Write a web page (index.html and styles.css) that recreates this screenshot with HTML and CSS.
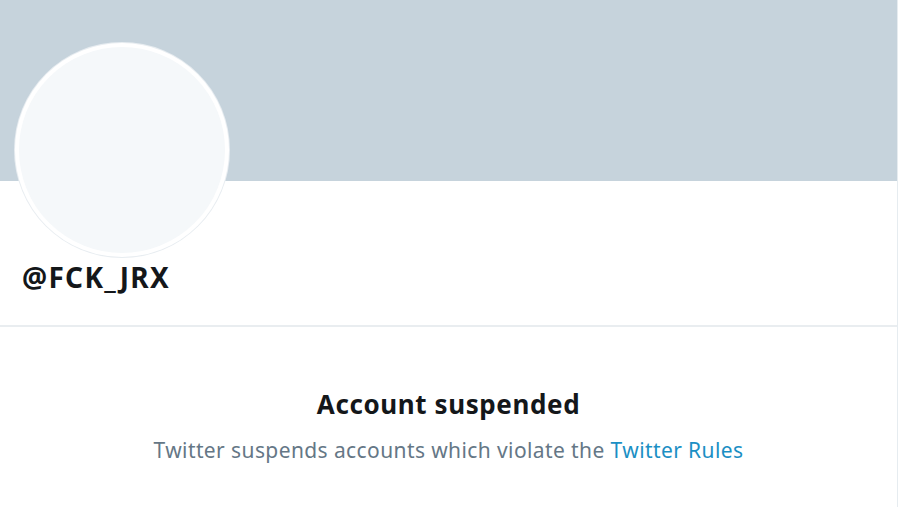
FILE: index.html
```html
<!DOCTYPE html>
<html lang="en">
<head>
    <meta charset="UTF-8">
    <meta name="viewport" content="width=device-width, initial-scale=1.0">
    <title>@FCK_JRX</title>
    <link rel="stylesheet" href="styles.css">
</head>
<body>
    <main class="profile">
        <div class="banner"></div>

        <div class="profile-head">
            <div class="avatar"></div>
            <h1 class="handle">@FCK_JRX</h1>
        </div>

        <section class="suspended">
            <h2>Account suspended</h2>
            <p>Twitter suspends accounts which violate the <a href="#">Twitter Rules</a></p>
        </section>
    </main>
</body>
</html>
```

FILE: styles.css
```css
body {
    margin: 0;
    background: #fff;
    font-family: "Noto Sans", "Open Sans", sans-serif;
    color: #14171a;
}
.profile {
    width: 897px;
    min-height: 507px;
    border-right: 1px solid #e6ecf0;
}
.banner {
    height: 181px;
    background-color: #c6d3dc;
}
.profile-head {
    display: flex;
    flex-direction: column;
    align-items: flex-start;
    padding: 0 22px 31px;
    border-bottom: 2px solid #e9edf0;
}
.avatar {
    width: 206px;
    height: 206px;
    margin: -138px 0 0 -7px;
    border-radius: 50%;
    background-color: #f5f8fa;
    border: 4px solid #fff;
    box-shadow: 0 0 0 1px #e8edf1;
}
.handle {
    margin: 3px 0 0;
    font-size: 28px;
    font-weight: 700;
    line-height: 34px;
    letter-spacing: 1.3px;
    color: #14171a;
}
.suspended {
    text-align: center;
    padding-top: 60px;
}
.suspended h2 {
    margin: 0;
    font-size: 26px;
    font-weight: 700;
    line-height: 34px;
    letter-spacing: 0.6px;
}
.suspended p {
    margin: 15px 0 0;
    font-size: 21px;
    line-height: 28px;
    letter-spacing: 0.4px;
    color: #657786;
}
.suspended a {
    color: #1b8fc4;
    text-decoration: none;
}
```
